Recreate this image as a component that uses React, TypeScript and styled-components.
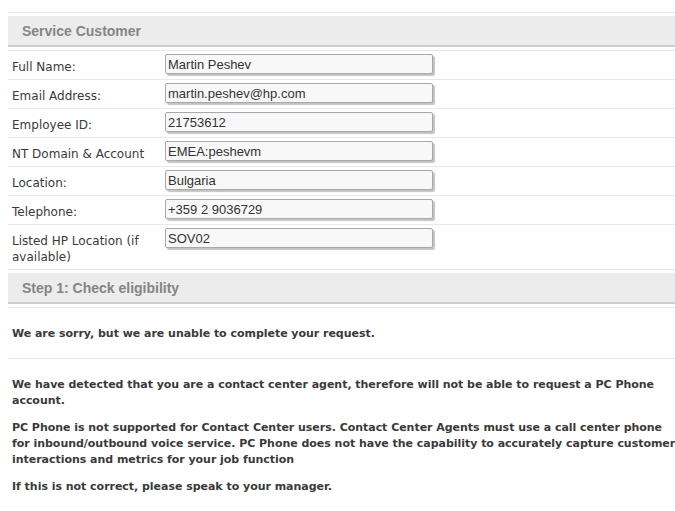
import * as React from 'react'
import styled, { createGlobalStyle } from 'styled-components'

const GlobalStyle = createGlobalStyle`
  html, body {
    margin: 0;
    padding: 0;
    background: #ffffff;
    overflow: hidden;
  }
`

const Page = styled.div`
  padding: 12px 0 0 8px;
  width: 720px;
`

const Section = styled.section`
  border-top: 1px solid #e6e6e6;
  padding-top: 3px;
`

const SectionHeader = styled.div`
  background: #ececec;
  border-bottom: 2px solid #cdcdcd;
  height: 29px;
  padding-left: 14px;
  display: flex;
  align-items: center;
  font-family: "Liberation Sans", Arial, sans-serif;
  font-weight: bold;
  font-size: 14px;
  color: #858585;
  margin-bottom: 3px;
`

const Row = styled.div`
  display: grid;
  grid-template-columns: 157px 270px;
  border-top: 1px solid #e8e8e8;
  min-height: 28px;
`

const Label = styled.div`
  font-family: "DejaVu Sans", Verdana, sans-serif;
  font-size: 12px;
  line-height: 16px;
  color: #3a3a3a;
  padding: 8px 4px 4px 4px;
`

const Field = styled.div`
  padding-top: 3px;
`

const Input = styled.input`
  box-sizing: border-box;
  width: 268px;
  height: 20px;
  border: 1px solid #a8a8a8;
  border-radius: 2px;
  background: #f8f8f8;
  box-shadow: 2px 2px 1px #c4c4c4;
  font-family: "Liberation Sans", Arial, sans-serif;
  font-size: 13px;
  color: #333333;
  padding: 0 2px;
  outline: none;
`

const Message = styled.div`
  border-top: 1px solid #e6e6e6;
  padding: 18px 4px 16px;
  width: 664px;
  font-family: "DejaVu Sans", Verdana, sans-serif;
  font-size: 11px;
  font-weight: bold;
  line-height: 16px;
  letter-spacing: -0.03px;
  color: #3a3a3a;
`

const Para = styled.p`
  margin: 0 0 11px 0;
`

const fields: [string, string][] = [
  ['Full Name:', 'Martin Peshev'],
  ['Email Address:', 'martin.peshev@hp.com'],
  ['Employee ID:', '21753612'],
  ['NT Domain & Account', 'EMEA:peshevm'],
  ['Location:', 'Bulgaria'],
  ['Telephone:', '+359 2 9036729'],
  ['Listed HP Location (if available)', 'SOV02'],
]

export default function App() {
  return (
    <>
      <GlobalStyle />
      <Page>
        <Section>
          <SectionHeader>Service Customer</SectionHeader>
          {fields.map(([label, value]) => (
            <Row key={label}>
              <Label>{label}</Label>
              <Field>
                <Input readOnly value={value} />
              </Field>
            </Row>
          ))}
        </Section>
        <Section>
          <SectionHeader>Step 1: Check eligibility</SectionHeader>
          <Message>We are sorry, but we are unable to complete your request.</Message>
          <Message>
            <Para>
              We have detected that you are a contact center agent, therefore will not be able to request a PC Phone
              account.
            </Para>
            <Para>
              PC Phone is not supported for Contact Center users. Contact Center Agents must use a call center phone
              for inbound/outbound voice service. PC Phone does not have the capability to accurately capture customer
              interactions and metrics for your job function
            </Para>
            <Para>If this is not correct, please speak to your manager.</Para>
          </Message>
        </Section>
      </Page>
    </>
  )
}
